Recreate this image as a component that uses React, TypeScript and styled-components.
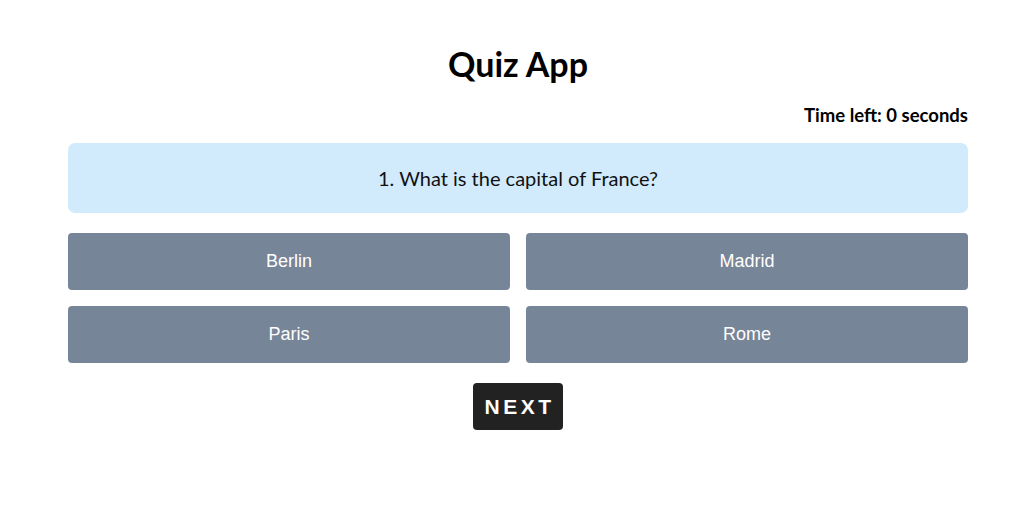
import React from "react";
import styled, { createGlobalStyle } from "styled-components";

const Global = createGlobalStyle`
  html, body { margin: 0; padding: 0; background: #fff; }
  body { font-family: "Lato", "Noto Sans", sans-serif; }
`;

const Page = styled.div`
  padding: 34px 0 0 11px;
  display: flex;
  justify-content: center;
`;

const Quiz = styled.main`
  width: 900px;
  display: flex;
  flex-direction: column;
`;

const Title = styled.h1`
  margin: 0;
  text-align: center;
  font-family: "Lato", sans-serif;
  font-weight: 700;
  font-size: 34px;
  line-height: 60px;
  color: #000;
`;

const Timer = styled.div`
  margin-top: 11px;
  text-align: right;
  font-family: "Lato", sans-serif;
  font-weight: 700;
  font-size: 18.5px;
  line-height: 20px;
  color: #000;
`;

const QuestionBox = styled.div`
  margin-top: 18px;
  height: 70px;
  background: #d1ebfd;
  border-radius: 7px;
  display: flex;
  align-items: center;
  justify-content: center;
  font-family: "Lato", sans-serif;
  font-size: 20px;
  color: #111;
`;

const Options = styled.div`
  margin-top: 20px;
  display: grid;
  grid-template-columns: 1fr 1fr;
  gap: 16px;
`;

const Option = styled.button`
  height: 57px;
  border: none;
  border-radius: 4px;
  background: #778599;
  color: #fff;
  font-family: "Liberation Sans", Arial, sans-serif;
  font-size: 18px;
  cursor: pointer;
`;

const Footer = styled.div`
  margin-top: 20px;
  display: flex;
  justify-content: center;
`;

const NextButton = styled.button`
  width: 90px;
  height: 47px;
  border: none;
  border-radius: 4px;
  background: #222;
  color: #fff;
  font-family: "Liberation Sans", Arial, sans-serif;
  font-weight: 700;
  font-size: 21px;
  letter-spacing: 3.5px;
  padding: 0 0 0 3px;
  cursor: pointer;
`;

export default function App() {
  const options = ["Berlin", "Madrid", "Paris", "Rome"];
  return (
    <>
      <Global />
      <Page>
        <Quiz>
          <Title>Quiz App</Title>
          <Timer>Time left: 0 seconds</Timer>
          <QuestionBox>1. What is the capital of France?</QuestionBox>
          <Options>
            {options.map((o) => (
              <Option key={o}>{o}</Option>
            ))}
          </Options>
          <Footer>
            <NextButton>NEXT</NextButton>
          </Footer>
        </Quiz>
      </Page>
    </>
  );
}
